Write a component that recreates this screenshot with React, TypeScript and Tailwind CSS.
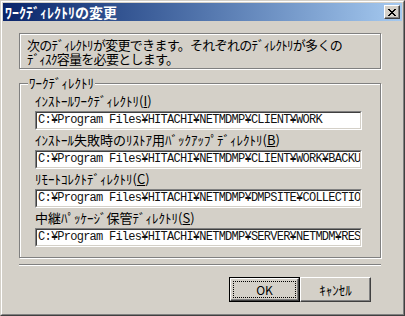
const jp = "font-['Noto_Sans_CJK_JP',sans-serif]";
const mono = "font-['Liberation_Mono',monospace]";

const dirs = [
  { label: "ｲﾝｽﾄｰﾙﾜｰｸﾃﾞｨﾚｸﾄﾘ", key: "I", path: "C:¥Program Files¥HITACHI¥NETMDMP¥CLIENT¥WORK" },
  { label: "ｲﾝｽﾄｰﾙ失敗時のﾘｽﾄｱ用ﾊﾞｯｸｱｯﾌﾟﾃﾞｨﾚｸﾄﾘ", key: "B", path: "C:¥Program Files¥HITACHI¥NETMDMP¥CLIENT¥WORK¥BACKUP" },
  { label: "ﾘﾓｰﾄｺﾚｸﾄﾃﾞｨﾚｸﾄﾘ", key: "C", path: "C:¥Program Files¥HITACHI¥NETMDMP¥DMPSITE¥COLLECTION" },
  { label: "中継ﾊﾟｯｹｰｼﾞ保管ﾃﾞｨﾚｸﾄﾘ", key: "S", path: "C:¥Program Files¥HITACHI¥NETMDMP¥SERVER¥NETMDM¥RES" }
];

function CloseGlyph() {
  // 8x7 pixel X like the classic caption button
  const px = [
    [0, 0], [1, 0], [6, 0], [7, 0],
    [1, 1], [2, 1], [5, 1], [6, 1],
    [2, 2], [3, 2], [4, 2], [5, 2],
    [3, 3], [4, 3],
    [2, 4], [3, 4], [4, 4], [5, 4],
    [1, 5], [2, 5], [5, 5], [6, 5],
    [0, 6], [1, 6], [6, 6], [7, 6]
  ];
  return (
    <svg width="8" height="7" viewBox="0 0 8 7" shapeRendering="crispEdges">
      {px.map(([x, y]) => (
        <rect key={`${x}-${y}`} x={x} y={y} width="1" height="1" fill="#000" />
      ))}
    </svg>
  );
}

function PathField({ value }: { value: string }) {
  return (
    <div className="h-[19px] w-[327px] border border-t-[#808080] border-l-[#808080] border-r-white border-b-white">
      <div className="flex h-full items-center overflow-hidden border border-t-[#404040] border-l-[#404040] border-r-[#d4d0c8] border-b-[#d4d0c8] bg-white pl-[1px]">
        <span className={`${mono} whitespace-nowrap text-[12px] leading-[15px] tracking-[-0.75px] text-[#111]`}>
          {value}
        </span>
      </div>
    </div>
  );
}

export default function App() {
  return (
    <div className={`${jp} h-[316px] w-[405px] border border-t-[#d4d0c8] border-l-[#d4d0c8] border-r-[#404040] border-b-[#404040] text-black`}>
      <div className="h-full border border-t-white border-l-white border-r-[#808080] border-b-[#808080]">
        <div className="flex h-full flex-col bg-[#d4d0c8] p-[1px]">
          {/* caption */}
          <div className="flex h-[18px] items-center justify-between bg-gradient-to-r from-[#0a246a] to-[#a6caf0] pl-[2px] pr-[2px]">
            <span className="text-[14px] font-bold leading-[18px] text-white">ﾜｰｸﾃﾞｨﾚｸﾄﾘの変更</span>
            <div className="flex h-[14px] w-[16px] items-center justify-center border border-t-white border-l-white border-r-[#404040] border-b-[#404040] bg-[#d4d0c8] shadow-[inset_-1px_-1px_0_#808080]">
              <CloseGlyph />
            </div>
          </div>

          <div className="flex flex-col pl-[16px] pr-[20px] pt-[12px]">
            {/* info text */}
            <div className="h-[36px] w-[362px] border border-[#808080] pl-[7px] pt-[4px] text-[13px] leading-[14px] tracking-[-0.7px] shadow-[1px_1px_0_#fff,inset_1px_1px_0_#fff]">
              次のﾃﾞｨﾚｸﾄﾘが変更できます。それぞれのﾃﾞｨﾚｸﾄﾘが多くの
              <br />
              ﾃﾞｨｽｸ容量を必要とします。
            </div>

            {/* group box */}
            <div className="relative mt-[14px] h-[175px] w-[362px] border border-[#808080] pl-[15px] pt-[7px] shadow-[1px_1px_0_#fff,inset_1px_1px_0_#fff]">
              <span className="absolute left-[8px] top-[-8px] bg-[#d4d0c8] px-[1px] text-[13px] leading-[13px]">
                ﾜｰｸﾃﾞｨﾚｸﾄﾘ
              </span>
              {dirs.map((d) => (
                <div key={d.key}>
                  <div className="h-[20px] pt-[3px] text-[13px] leading-[13px]">
                    {d.label}(<span className="underline underline-offset-[1px]">{d.key}</span>)
                  </div>
                  <PathField value={d.path} />
                </div>
              ))}
            </div>

            {/* separator */}
            <div className="mt-[6px] h-[2px] w-[362px] border-t border-b border-t-[#808080] border-b-white" />

            {/* buttons */}
            <div className="mt-[11px] flex justify-end pr-[11px]">
              <div className="h-[25px] w-[71px] border border-black">
                <div className="h-full border border-t-white border-l-white border-r-[#404040] border-b-[#404040] p-[2px] shadow-[inset_-1px_-1px_0_#808080]">
                  <div className="flex h-full items-center justify-center border border-dotted border-black text-[12px] leading-[12px]">
                    OK
                  </div>
                </div>
              </div>
              <div className="flex h-[25px] w-[71px] items-center justify-center border border-t-white border-l-white border-r-[#404040] border-b-[#404040] text-[13px] leading-[13px] shadow-[inset_-1px_-1px_0_#808080]">
                ｷｬﾝｾﾙ
              </div>
            </div>
          </div>
        </div>
      </div>
    </div>
  );
}
